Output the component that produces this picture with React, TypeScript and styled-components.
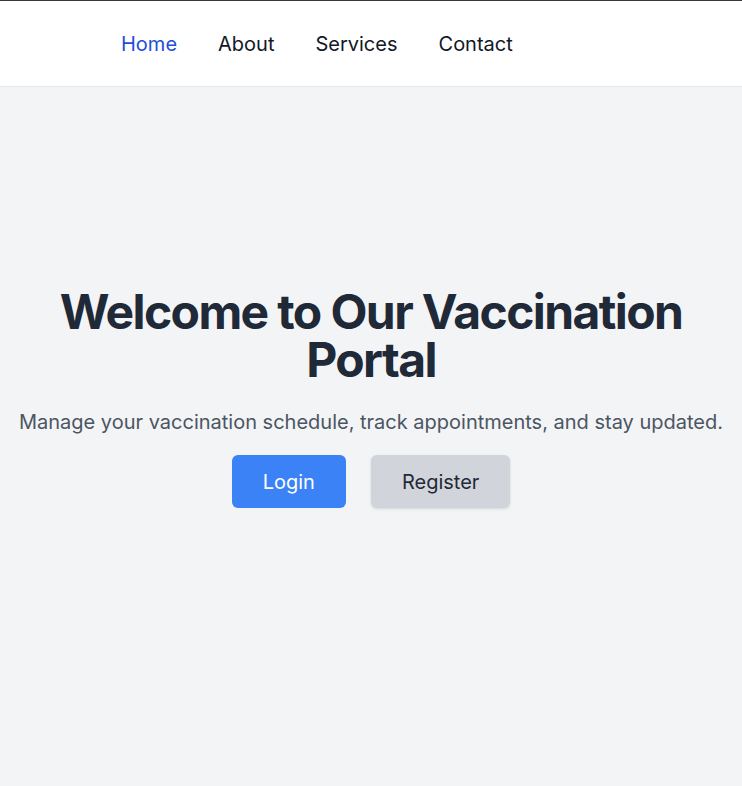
import React from "react";
import styled, { createGlobalStyle } from "styled-components";

const Global = createGlobalStyle`
  html, body { margin: 0; padding: 0; }
  body {
    font-family: Inter, "Noto Sans", sans-serif;
    background: #f3f4f6;
  }
  * { box-sizing: border-box; }
`;

const Page = styled.div`
  min-height: 786px;
  background: #f3f4f6;
  border-top: 1px solid #3a3a3a;
`;

const Nav = styled.nav`
  background: #ffffff;
  border-bottom: 1px solid #e5e7eb;
  height: 86px;
  display: flex;
  align-items: center;
  padding-left: 121px;
  gap: 41px;
`;

const NavLink = styled.a<{ $active?: boolean }>`
  font-size: 20px;
  line-height: 28px;
  color: ${(p) => (p.$active ? "#1d4ed8" : "#111827")};
  text-decoration: none;
`;

const Hero = styled.main`
  display: flex;
  flex-direction: column;
  align-items: center;
  text-align: center;
  padding-top: 201px;
`;

const Title = styled.h1`
  margin: 0;
  font-size: 48px;
  line-height: 48px;
  font-weight: 700;
  letter-spacing: -1.6px;
  color: #1f2937;
  max-width: 680px;
`;

const Subtitle = styled.p`
  margin: 24px 0 0;
  font-size: 20px;
  line-height: 28px;
  color: #4b5563;
  white-space: nowrap;
`;

const Actions = styled.div`
  display: flex;
  gap: 25px;
  margin-top: 19px;
`;

const Button = styled.button<{ $variant: "primary" | "secondary" }>`
  font-family: inherit;
  font-size: 20px;
  line-height: 28px;
  border: none;
  border-radius: 6px;
  height: 53px;
  padding: 0 31px;
  cursor: pointer;
  background: ${(p) => (p.$variant === "primary" ? "#3b82f6" : "#d1d5db")};
  color: ${(p) => (p.$variant === "primary" ? "#ffffff" : "#1f2937")};
  box-shadow: ${(p) =>
    p.$variant === "primary" ? "none" : "0 1px 3px rgba(0,0,0,0.12)"};
`;

export default function App() {
  return (
    <>
      <Global />
      <Page>
        <Nav>
          <NavLink $active href="#">Home</NavLink>
          <NavLink href="#">About</NavLink>
          <NavLink href="#">Services</NavLink>
          <NavLink href="#">Contact</NavLink>
        </Nav>
        <Hero>
          <Title>Welcome to Our Vaccination Portal</Title>
          <Subtitle>
            Manage your vaccination schedule, track appointments, and stay updated.
          </Subtitle>
          <Actions>
            <Button $variant="primary">Login</Button>
            <Button $variant="secondary">Register</Button>
          </Actions>
        </Hero>
      </Page>
    </>
  );
}
